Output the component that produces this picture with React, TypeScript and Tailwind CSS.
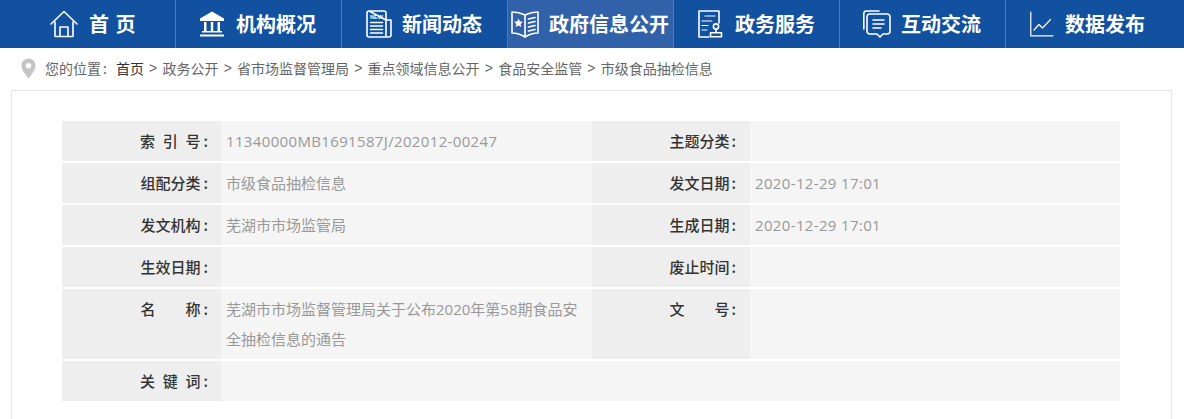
import React from "react";

const cjk = "font-['Microsoft_YaHei','Noto_Sans_CJK_SC','Noto_Sans',sans-serif]";

const S = { fill: "none", stroke: "white", strokeWidth: 1.6, strokeLinecap: "round" as const, strokeLinejoin: "round" as const };

const HomeIcon = () => (
  <svg width="28" height="28" viewBox="0 0 28 28" {...S}>
    <path d="M1 14 14 1.500 27 14" />
    <path d="M5 12V26.500H23V12" />
    <path d="M10 26.500V17H18V26.500" />
  </svg>
);
const BankIcon = () => (
  <svg width="26" height="26" viewBox="0 0 26 26">
    <path d="M13 0.500 25 7.500V10H1V7.500Z" fill="white" />
    <rect x="5" y="11" width="2.500" height="9" fill="white" />
    <rect x="11.750" y="11" width="2.500" height="9" fill="white" />
    <rect x="18.500" y="11" width="2.500" height="9" fill="white" />
    <rect x="3" y="20" width="20" height="1.500" fill="white" />
    <rect x="1" y="23.500" width="24" height="2" fill="white" />
  </svg>
);
const NewsIcon = () => (
  <svg width="26" height="28" viewBox="0 0 26 28" {...S}>
    <path d="M3 1H18A2 2 0 0 1 20 3V27M20 10H25V25A2 2 0 0 1 23 27H3A2 2 0 0 1 1 25V3A2 2 0 0 1 3 1Z" />
    <text x="4" y="9" fill="white" stroke="none" fontSize="5.500" fontWeight="700" fontFamily="Liberation Sans">NEW</text>
    <path d="M4.500 12.500H16.500M4.500 16H16.500M4.500 19.500H16.500M4.500 23H16.500" />
  </svg>
);
const BookIcon = () => (
  <svg width="28" height="28" viewBox="0 0 28 28" {...S}>
    <path d="M14 5C10 3 5 2 1 2V23C5 23 10 24.500 14 27C18 24.500 23 23 27 23V2C23 2 18 3 14 5V27" />
    <path d="M17.500 9 24 7.500M17.500 13 24 11.500M17.500 17 24 15.500M17.500 21 24 19.500" />
    <path d="M7.500 8.500 8.800 11.500 12 11.800 9.600 13.900 10.400 17 7.500 15.400 4.600 17 5.400 13.900 3 11.800 6.200 11.500Z" fill="white" stroke="none" />
  </svg>
);
const ServiceIcon = () => (
  <svg width="26" height="28" viewBox="0 0 26 28" {...S}>
    <path d="M12 27H2V1H22V13" />
    <path d="M8 6H18M5 11H15M5 15.500H11M5 20H10" strokeWidth={1.2} />
    <circle cx="19" cy="16.500" r="2.600" />
    <path d="M19 19.500V22.500M13.500 22.800H24.500V26.800H13.500Z" />
  </svg>
);
const ChatIcon = () => (
  <svg width="28" height="28" viewBox="0 0 28 28" {...S}>
    <path d="M16 1H3A2.500 2.500 0 0 0 0.800 3.500V19" />
    <path d="M6 4H24A3 3 0 0 1 27 7V21A3 3 0 0 1 24 24H20L17 27 14 24H7A3 3 0 0 1 4 21V7A3 3 0 0 1 6 4Z" />
    <path d="M10 10H21M10 14H21M10 18H18" />
  </svg>
);
const ChartIcon = () => (
  <svg width="24" height="26" viewBox="0 0 24 26" {...S} strokeWidth={1.2}>
    <path d="M0.800 1V24.800H23" />
    <path d="M4 19 9 13.500 12.500 17 20.500 8.500" />
  </svg>
);

const nav: { t: string; icon: React.ReactNode; w: string; active?: boolean; gap: string; pl: string; last?: boolean }[] = [
  { t: "首 页", icon: <HomeIcon />, w: "w-[176px]", gap: "gap-[11px]", pl: "pl-[50px]" },
  { t: "机构概况", icon: <BankIcon />, w: "w-[166px]", gap: "gap-[11px]", pl: "pl-[23px]" },
  { t: "新闻动态", icon: <NewsIcon />, w: "w-[166px]", gap: "gap-[10px]", pl: "pl-[24px]" },
  { t: "政府信息公开", icon: <BookIcon />, w: "w-[167px]", active: true, gap: "gap-[10px]", pl: "pl-[3px]" },
  { t: "政务服务", icon: <ServiceIcon />, w: "w-[166px]", gap: "gap-[12px]", pl: "pl-[23px]" },
  { t: "互动交流", icon: <ChatIcon />, w: "w-[166px]", gap: "gap-[10px]", pl: "pl-[23px]" },
  { t: "数据发布", icon: <ChartIcon />, w: "flex-1", gap: "gap-[11px]", pl: "pl-[24px]", last: true },
];

const crumbs = ["政务公开", "省市场监督管理局", "重点领域信息公开", "食品安全监管", "市级食品抽检信息"];

const L = ({ children, tall, right }: { children: string; tall?: boolean; right?: boolean }) => (
  <div className={`bg-[#eeeeee] text-right text-[15px] font-medium text-[#333333] whitespace-pre [word-spacing:0.5px] ${right ? "pr-[14px]" : "pr-[13px]"} ${tall ? "pt-[10px] leading-[20px]" : "leading-[40px]"}`}>
    {children}
    <span className={right ? "ml-[2px]" : "ml-[3px]"}>:</span>
  </div>
);
const V = ({ children, tall, num }: { children?: string; tall?: boolean; num?: boolean }) => (
  <div className={`bg-[#f5f5f5] pl-[5px] pr-[10px] font-['Open_Sans','Noto_Sans_CJK_SC',sans-serif] text-[15px] text-[#999999] ${num ? "tracking-[0.35px]" : ""} ${tall ? "py-[5px] leading-[30px]" : "leading-[40px]"}`}>
    {children}
  </div>
);

export default function App() {
  return (
    <div className={`h-[419px] overflow-hidden bg-white ${cjk}`}>
      <nav className="flex h-[48px] bg-[#11519f]">
        {nav.map((n) => (
          <div
            key={n.t}
            className={`${n.w} ${n.pl} ${n.gap} flex h-full items-center text-white text-[20px] font-bold whitespace-pre [word-spacing:2px] ${n.last ? "" : "border-r border-[#4d7cb8]"} ${n.active ? "bg-[#3162a9] border-l border-[#4d7cb8] ml-[-1px]" : ""}`}
          >
            {n.icon}
            <span>{n.t}</span>
          </div>
        ))}
      </nav>

      <div className="flex h-[42px] items-center pb-[2px] pl-[21px] text-[14px] text-[#666666]">
        <svg width="15" height="21" viewBox="0 0 15 21" className="mr-[9px] mt-[1px]">
          <path fillRule="evenodd" fill="#c4c4c4" d="M7.500 0.500C3.400 0.500 0.500 3.500 0.500 7.500C0.500 12 5 17 7.500 20.500C10 17 14.500 12 14.500 7.500C14.500 3.500 11.600 0.500 7.500 0.500ZM7.500 5A2.700 2.700 0 1 1 7.500 10.400A2.700 2.700 0 0 1 7.500 5Z" />
        </svg>
        <span>您的位置<span className="ml-[2px]">:</span></span>
        <span className="ml-[9px] text-[#333333]">首页</span>
        {crumbs.map((c) => (
          <React.Fragment key={c}>
            <span className="mx-[5.2px] font-['Liberation_Sans'] text-[14px]">&gt;</span>
            <span>{c}</span>
          </React.Fragment>
        ))}
      </div>

      <div className="mx-[11px] h-[400px] w-[1161px] border border-[#e5e5e5] px-[50px] pt-[30px]">
        <div className="grid w-[1058px] grid-cols-[159px_371px_158px_370px] gap-y-[2px]">
          <L>{"索  引  号"}</L>
          <V num>11340000MB1691587J/202012-00247</V>
          <L right>主题分类</L>
          <V />
          <L>组配分类</L>
          <V>市级食品抽检信息</V>
          <L right>发文日期</L>
          <V num>2020-12-29 17:01</V>
          <L>发文机构</L>
          <V>芜湖市市场监管局</V>
          <L right>生成日期</L>
          <V num>2020-12-29 17:01</V>
          <L>生效日期</L>
          <V />
          <L right>废止时间</L>
          <V />
          <L tall>{"名\u3000\u3000称"}</L>
          <V tall>芜湖市市场监督管理局关于公布2020年第58期食品安全抽检信息的通告</V>
          <L tall right>{"文\u3000\u3000号"}</L>
          <V tall />
          <L>{"关  键  词"}</L>
          <div className="col-span-3 bg-[#f5f5f5]" />
        </div>
      </div>
    </div>
  );
}
